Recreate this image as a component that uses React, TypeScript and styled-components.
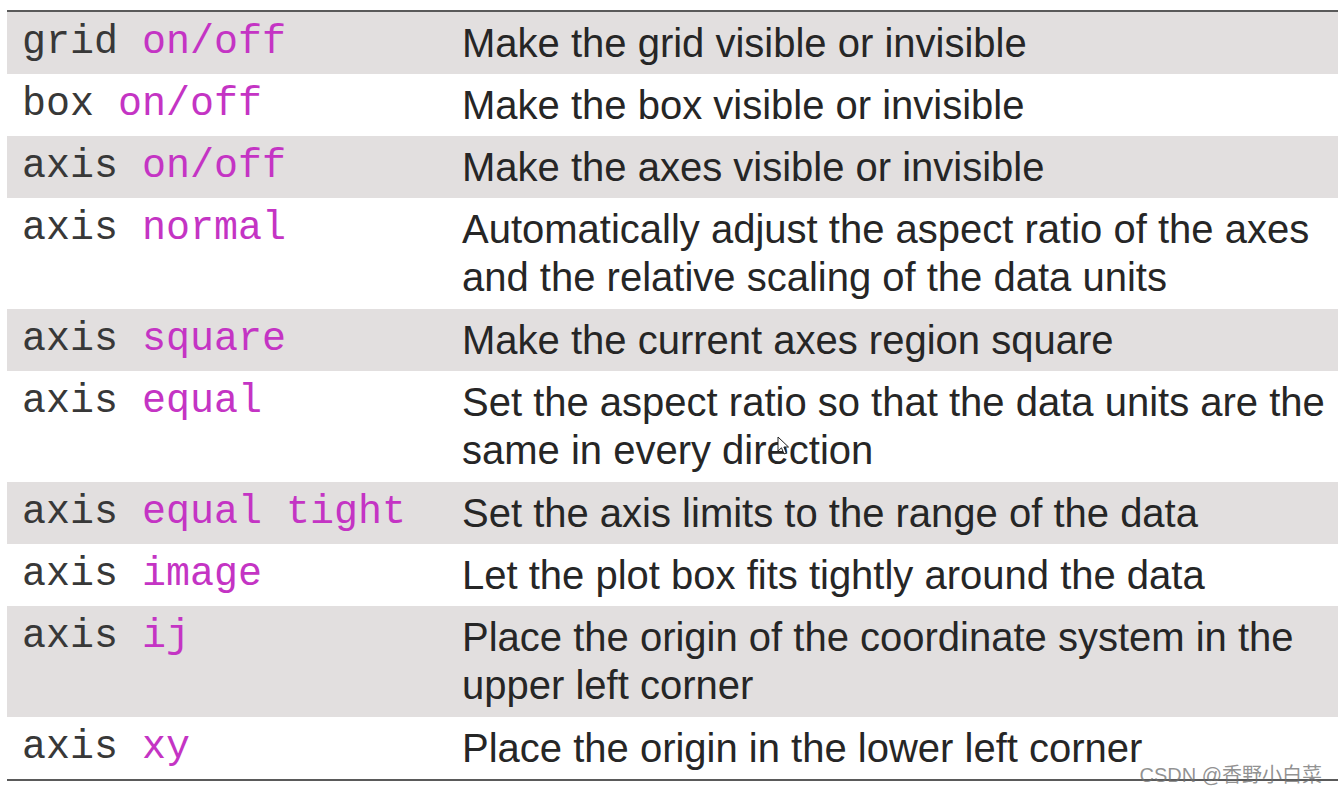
import styled, { createGlobalStyle } from "styled-components";

const GlobalStyle = createGlobalStyle`
  html, body {
    margin: 0;
    padding: 0;
    background: #ffffff;
  }
`;

type Row = {
  cmd: string;
  arg: string;
  desc: string[];
};

const rows: Row[] = [
  { cmd: "grid", arg: "on/off", desc: ["Make the grid visible or invisible"] },
  { cmd: "box", arg: "on/off", desc: ["Make the box visible or invisible"] },
  { cmd: "axis", arg: "on/off", desc: ["Make the axes visible or invisible"] },
  {
    cmd: "axis",
    arg: "normal",
    desc: [
      "Automatically adjust the aspect ratio of the axes",
      "and the relative scaling of the data units",
    ],
  },
  { cmd: "axis", arg: "square", desc: ["Make the current axes region square"] },
  {
    cmd: "axis",
    arg: "equal",
    desc: [
      "Set the aspect ratio so that the data units are the",
      "same in every direction",
    ],
  },
  { cmd: "axis", arg: "equal tight", desc: ["Set the axis limits to the range of the data"] },
  { cmd: "axis", arg: "image", desc: ["Let the plot box fits tightly around the data"] },
  {
    cmd: "axis",
    arg: "ij",
    desc: [
      "Place the origin of the coordinate system in the",
      "upper left corner",
    ],
  },
  { cmd: "axis", arg: "xy", desc: ["Place the origin in the lower left corner"] },
];

const Cursor = () => (
  <CursorMark width="14" height="20" viewBox="0 0 14 20">
    <path
      d="M1 1 L1 15 L4.5 11.8 L7 18 L9.3 17 L6.9 11 L11.5 11 Z"
      fill="#ffffff"
      stroke="#222"
      strokeWidth="1"
      strokeLinejoin="round"
    />
  </CursorMark>
);

const App = () => {
  return (
    <>
      <GlobalStyle />
      <Page>
        <Table>
          {rows.map((row, i) => (
            <TableRow key={i} $shaded={i % 2 === 0} $tall={row.desc.length > 1}>
              <Command>
                {row.cmd} <Arg>{row.arg}</Arg>
              </Command>
              <Description>
                {row.desc.map((line, j) => (
                  <Line key={j}>{line}</Line>
                ))}
              </Description>
            </TableRow>
          ))}
          <Cursor />
        </Table>
        <Watermark>CSDN @香野小白菜</Watermark>
      </Page>
    </>
  );
};

const Page = styled.div`
  position: relative;
  width: 1338px;
  height: 795px;
  padding: 10px 0 0 7px;
  box-sizing: border-box;
  overflow: hidden;
`;

const Table = styled.div`
  position: relative;
  display: flex;
  flex-direction: column;
  border-top: 2px solid #5a5a5a;
  border-bottom: 2px solid #5a5a5a;
`;

const TableRow = styled.div<{ $shaded: boolean; $tall: boolean }>`
  display: grid;
  grid-template-columns: 455px 1fr;
  padding: 7px 0 ${(p) => (p.$tall ? "8px" : "7px")};
  background: ${(p) => (p.$shaded ? "#e2dfdf" : "#ffffff")};
`;

const Command = styled.div`
  padding-left: 15px;
  font-family: "Liberation Mono", "Courier New", monospace;
  font-size: 40px;
  line-height: 48px;
  color: #383838;
  white-space: pre;
`;

const Arg = styled.span`
  color: #c434c4;
`;

const Description = styled.div`
  display: flex;
  flex-direction: column;
  font-family: "Liberation Sans", Arial, sans-serif;
  font-size: 40px;
  line-height: 48px;
  color: #262626;
`;

const Line = styled.span`
  white-space: nowrap;
`;

const CursorMark = styled.svg`
  position: absolute;
  left: 770px;
  top: 424px;
`;

const Watermark = styled.div`
  position: absolute;
  right: 16px;
  bottom: 7px;
  font-family: "Liberation Sans", "Noto Sans CJK SC", sans-serif;
  font-size: 20px;
  color: rgba(110, 110, 110, 0.75);
`;

export default App;
